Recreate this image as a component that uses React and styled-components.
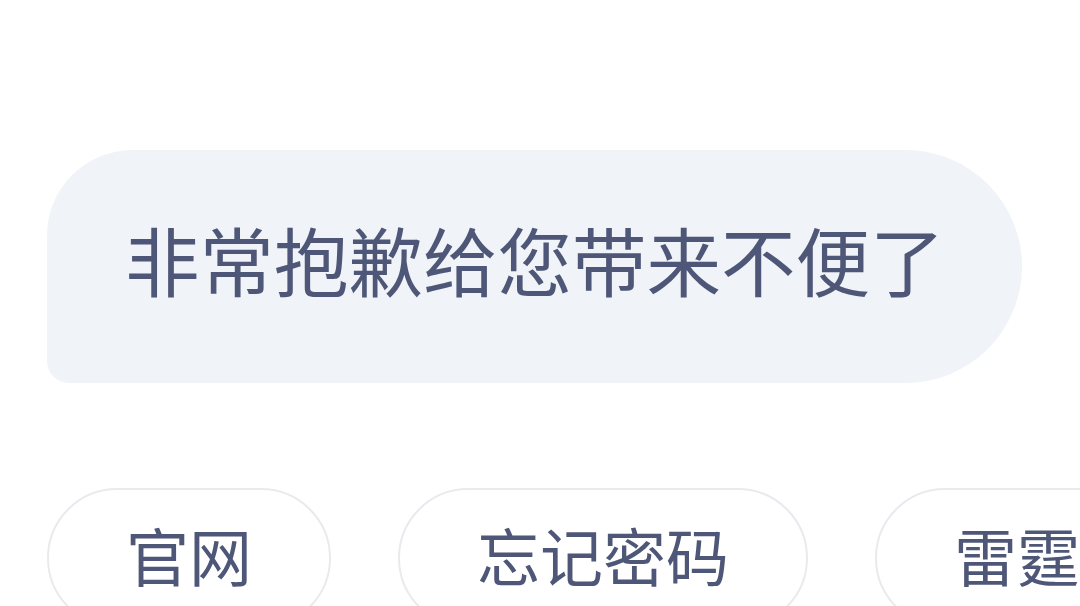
import React from "react";
import styled, { createGlobalStyle } from "styled-components";

const Global = createGlobalStyle`
  html, body {
    margin: 0;
    padding: 0;
    background: #ffffff;
    overflow: hidden;
  }
  body {
    font-family: "Noto Sans CJK SC", "Noto Sans", sans-serif;
  }
`;

const Page = styled.div`
  width: 1080px;
  height: 606px;
  overflow: hidden;
  box-sizing: border-box;
  padding: 150px 0 0 47px;
  display: flex;
  flex-direction: column;
  align-items: flex-start;
  gap: 105px;
`;

const Bubble = styled.div`
  box-sizing: border-box;
  flex: none;
  width: 975px;
  height: 233px;
  background: #f0f3f7;
  border-radius: 86px 117px 117px 22px;
  display: flex;
  align-items: center;
  padding: 0 0 14px 78px;
  font-size: 74.5px;
  line-height: 1;
  color: #4e5777;
  white-space: nowrap;
`;

const Chips = styled.div`
  flex: none;
  display: flex;
  flex-wrap: nowrap;
  gap: 67px;
  white-space: nowrap;
`;

const Chip = styled.div`
  box-sizing: border-box;
  flex: none;
  height: 140px;
  padding: 0 77px 10px;
  border: 2px solid #e8eaee;
  border-radius: 70px;
  background: #ffffff;
  display: flex;
  align-items: center;
  font-size: 63px;
  line-height: 1;
  color: #4e5777;
`;

export default function App() {
  return (
    <>
      <Global />
      <Page>
        <Bubble>非常抱歉给您带来不便了</Bubble>
        <Chips>
          <Chip>官网</Chip>
          <Chip>忘记密码</Chip>
          <Chip>雷霆游戏</Chip>
        </Chips>
      </Page>
    </>
  );
}
